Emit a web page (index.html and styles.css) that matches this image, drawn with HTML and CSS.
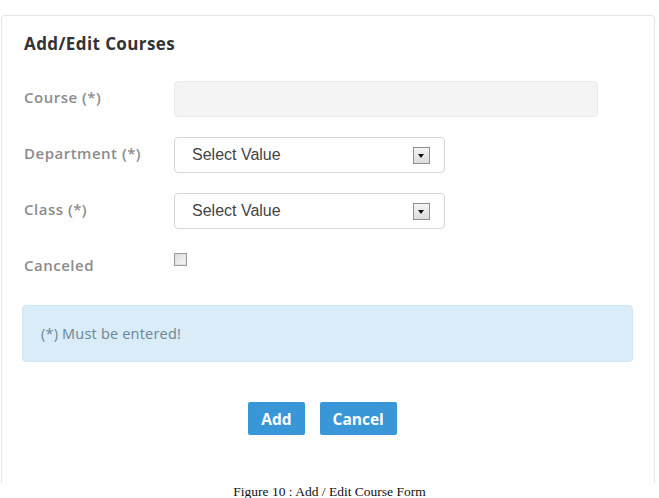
FILE: index.html
```html
<!DOCTYPE html>
<html lang="en">
<head>
    <meta charset="UTF-8">
    <meta name="viewport" content="width=device-width, initial-scale=1.0">
    <title>Add / Edit Courses</title>
    <link rel="stylesheet" href="styles.css">
</head>
<body>
    <main class="panel">
        <h2 class="panel-title">Add/Edit Courses</h2>
        <form class="course-form">
            <label class="field-label" for="course">Course (*)</label>
            <input class="text-input" type="text" id="course" disabled>

            <span class="field-label">Department (*)</span>
            <div class="select-box">
                <span class="select-text">Select Value</span>
                <span class="select-arrow"></span>
            </div>

            <span class="field-label">Class (*)</span>
            <div class="select-box">
                <span class="select-text">Select Value</span>
                <span class="select-arrow"></span>
            </div>

            <span class="field-label">Canceled</span>
            <span class="check-box"></span>
        </form>

        <div class="alert-info">(*) Must be entered!</div>

        <div class="actions">
            <button type="button" class="btn">Add</button>
            <button type="button" class="btn">Cancel</button>
        </div>
    </main>
    <p class="caption">Figure 10 : Add / Edit Course Form</p>
</body>
</html>
```

FILE: styles.css
```css
/* Estilos generales */
* {
    margin: 0;
    padding: 0;
    box-sizing: border-box;
}

body {
    background-color: #ffffff;
    font-family: 'Open Sans', 'DejaVu Sans', sans-serif;
    color: #333333;
}

/* Panel del formulario */
.panel {
    margin: 15px 0 0 1px;
    width: 654px;
    height: 468px;
    border: 1px solid #e6e6e6;
    border-bottom: none;
    border-radius: 4px 4px 0 0;
    padding: 17px 21px 0 20px;
}

.panel-title {
    font-size: 17px;
    line-height: 22px;
    font-weight: 700;
    color: #333333;
    letter-spacing: 0.4px;
    margin-bottom: 26px;
    padding-left: 2px;
}

.course-form {
    display: grid;
    grid-template-columns: 152px 1fr;
    grid-auto-rows: 36px;
    row-gap: 20px;
    align-items: center;
}

.field-label {
    font-size: 15px;
    font-weight: 600;
    color: #8c8c8c;
    padding-left: 2px;
    margin-bottom: 5px;
    letter-spacing: 0.5px;
}

.text-input {
    width: 424px;
    height: 36px;
    background-color: #f4f4f4;
    border: 1px solid #ebebeb;
    border-radius: 4px;
}

.select-box {
    width: 271px;
    height: 36px;
    border: 1px solid #d6d6d6;
    border-radius: 4px;
    display: flex;
    align-items: center;
    justify-content: space-between;
    padding: 0 14px 0 17px;
}

.select-text {
    font-family: 'Liberation Sans', Arial, sans-serif;
    font-size: 16px;
    color: #444444;
}

.select-arrow {
    width: 17px;
    height: 17px;
    border: 1px solid #8f8f8f;
    background: linear-gradient(#f4f4f4, #dcdcdc);
    position: relative;
}

.select-arrow::after {
    content: '';
    position: absolute;
    left: 4px;
    top: 6px;
    border-left: 3.5px solid transparent;
    border-right: 3.5px solid transparent;
    border-top: 4px solid #111111;
}

.check-box {
    align-self: start;
    margin-top: 4px;
    width: 13px;
    height: 13px;
    border: 1px solid #9a9a9a;
    background: linear-gradient(135deg, #dcdcdc, #f8f8f8);
    box-shadow: inset 0 0 0 1px #e2e2e2;
}

/* Aviso */
.alert-info {
    margin-top: 20px;
    height: 57px;
    width: 611px;
    background-color: #d9ecf7;
    border: 1px solid #d0e6f3;
    border-radius: 4px;
    padding-left: 18px;
    display: flex;
    align-items: center;
    font-size: 14.5px;
    letter-spacing: 0.2px;
    color: #6b8797;
}

/* Botones */
.actions {
    display: flex;
    justify-content: center;
    gap: 15px;
    margin-top: 40px;
    padding-right: 10px;
}

.btn {
    height: 33px;
    padding: 0 13px;
    background-color: #3a97d7;
    color: #ffffff;
    border: none;
    border-radius: 2px;
    font-family: 'Open Sans', sans-serif;
    font-size: 15.5px;
    font-weight: 700;
    cursor: pointer;
}

.btn:hover {
    background-color: #2f86c2;
}

.caption {
    text-align: center;
    font-family: 'Liberation Serif', 'Times New Roman', serif;
    font-size: 13.5px;
    line-height: 15px;
    margin-top: 1px;
    color: #111111;
}
```
